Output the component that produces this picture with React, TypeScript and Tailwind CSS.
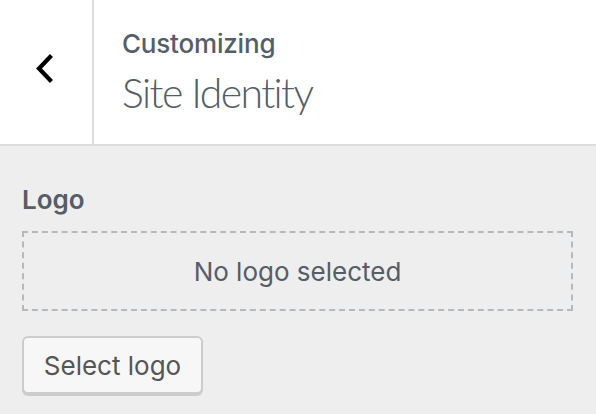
import React from 'react';

const font = { fontFamily: 'Inter, "Liberation Sans", sans-serif' };
const lightFont = { fontFamily: 'Lato, "Liberation Sans", sans-serif' };

const BackChevron: React.FC = () => (
  <svg width="20" height="32" viewBox="0 0 20 32" fill="none">
    <path d="M15 3 L4 14.5 L15 26" stroke="#000" strokeWidth="4.2" strokeLinecap="square" strokeLinejoin="miter" />
  </svg>
);

const App: React.FC = () => {
  return (
    <div className="w-[596px] h-[414px] bg-[#eeeeee] overflow-hidden" style={font}>
      {/* Header */}
      <div className="flex h-[146px] bg-white border-b-2 border-[#dddddd]">
        <button className="w-[94px] shrink-0 border-r-2 border-[#dddddd] flex items-start pt-[54px] pl-[35px]">
          <BackChevron />
        </button>
        <div className="pl-[28px] pt-[28px]">
          <div className="text-[26px] leading-[32px] font-medium text-[#555d66] tracking-[-0.2px]">Customizing</div>
          <div className="text-[41px] leading-[48px] font-light text-[#555d66] mt-[9px] tracking-[-1.6px]" style={lightFont}>
            Site Identity
          </div>
        </div>
      </div>

      {/* Logo control */}
      <div className="px-[22px] pt-[38px]">
        <div className="text-[26px] leading-[32px] font-semibold text-[#555d66]">Logo</div>
        <div className="mt-[15px] h-[80px] w-[551px] border-2 border-dashed border-[#b4b9be] flex items-center justify-center">
          <span className="text-[26px] text-[#555d66]">No logo selected</span>
        </div>
        <button className="mt-[25px] h-[58px] w-[181px] bg-[#f7f7f7] border-2 border-[#cccccc] rounded-[6px] shadow-[0_2px_0_#cccccc] text-[26px] text-[#555555] flex items-center justify-center">
          Select logo
        </button>
      </div>
    </div>
  );
};

export default App;
